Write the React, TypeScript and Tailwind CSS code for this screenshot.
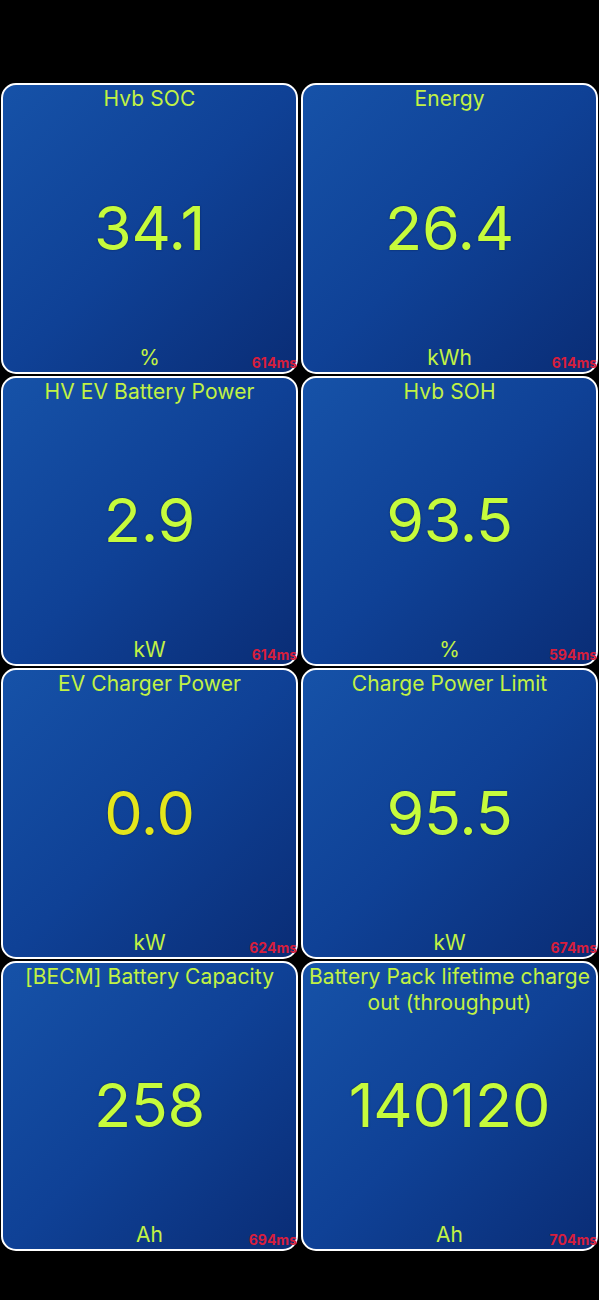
const tiles = [
  { title: "Hvb SOC", value: "34.1", unit: "%", ms: "614ms" },
  { title: "Energy", value: "26.4", unit: "kWh", ms: "614ms" },
  { title: "HV EV Battery Power", value: "2.9", unit: "kW", ms: "614ms" },
  { title: "Hvb SOH", value: "93.5", unit: "%", ms: "594ms" },
  { title: "EV Charger Power", value: "0.0", unit: "kW", ms: "624ms", warn: true },
  { title: "Charge Power Limit", value: "95.5", unit: "kW", ms: "674ms" },
  { title: "[BECM] Battery Capacity", value: "258", unit: "Ah", ms: "694ms" },
  { title: "Battery Pack lifetime charge out (throughput)", value: "140120", unit: "Ah", ms: "704ms" },
];

function Tile({ title, value, unit, ms, warn }: (typeof tiles)[number] & { warn?: boolean }) {
  return (
    <div className="relative grid h-[290.5px] rounded-[15px] border-2 border-white bg-[linear-gradient(135deg,#1652a8_0%,#0f4196_50%,#0a2d76_100%)] px-1">
      <div className="col-start-1 row-start-1 self-start pt-[1px] text-center text-[21px] leading-[26px] tracking-[0.1px] text-[#c2f244]">
        {title}
      </div>
      <div
        className={`col-start-1 row-start-1 self-center text-center text-[61px] leading-none tracking-[-0.3px] [text-shadow:0_0_2px_#0a2250] ${
          warn ? "text-[#e4e61c]" : "text-[#c6fb3c]"
        }`}
      >
        {value}
      </div>
      <div className="col-start-1 row-start-1 self-end pb-[1px] text-center text-[21px] leading-[26px] text-[#c2f244]">
        {unit}
      </div>
      <span className="absolute right-[-1px] bottom-[2px] text-[14px] font-bold leading-none text-[#d81e3c]">
        {ms}
      </span>
    </div>
  );
}

export default function App() {
  return (
    <div className="min-h-[1300px] w-[599px] bg-black pt-[83px] font-['Inter',sans-serif]">
      <div className="grid grid-cols-2 gap-x-[3px] gap-y-[2px] px-[1px]">
        {tiles.map((t) => (
          <Tile key={t.title} {...t} />
        ))}
      </div>
    </div>
  );
}
